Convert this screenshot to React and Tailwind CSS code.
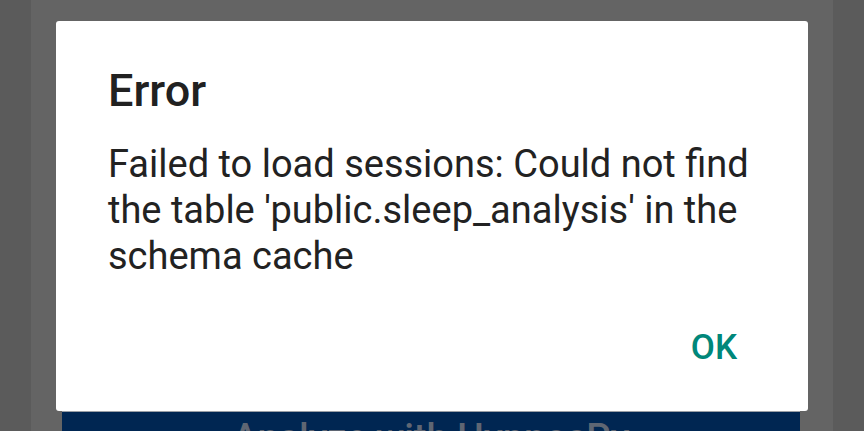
import React from 'react';

const font = { fontFamily: 'Roboto, "Noto Sans", sans-serif' };

const ErrorDialog = ({ title, message, onOk }) => (
  <div className="absolute inset-0 flex items-start pt-[21px] px-[56px]">
    <div className="w-[752px] h-[390px] bg-white rounded-[3px] flex flex-col pt-[44px] px-[52px] pb-[39px]">
      <h2 className="text-[45px] leading-[52px] font-medium text-[#212121]">{title}</h2>
      <p className="mt-[24px] text-[38px] leading-[46px] text-[#222222]">{message}</p>
      <div className="mt-auto flex justify-end">
        <button
          onClick={onOk}
          className="mr-[19px] text-[35px] leading-[48px] font-medium text-[#00877a] uppercase"
        >
          OK
        </button>
      </div>
    </div>
  </div>
);

export default function App() {
  return (
    <div className="relative w-[864px] h-[431px] overflow-hidden bg-[#5b5b5b]" style={font}>
      {/* page behind the dialog, dimmed by the scrim */}
      <div className="flex h-full pl-[31px] pr-[31px]">
        <div className="flex-1 bg-[#646464] flex flex-col pl-[31px] pr-[33px]">
          <div className="mt-[411px] border-t border-[#9a9fa6] bg-[#002652] pt-[4px] pb-4 flex justify-center">
            <span className="text-[38px] leading-[44px] font-medium text-[#5f6673]">
              Analyze with HypnosPy
            </span>
          </div>
        </div>
      </div>

      <ErrorDialog
        title="Error"
        message="Failed to load sessions: Could not find the table 'public.sleep_analysis' in the schema cache"
        onOk={() => {}}
      />
    </div>
  );
}
